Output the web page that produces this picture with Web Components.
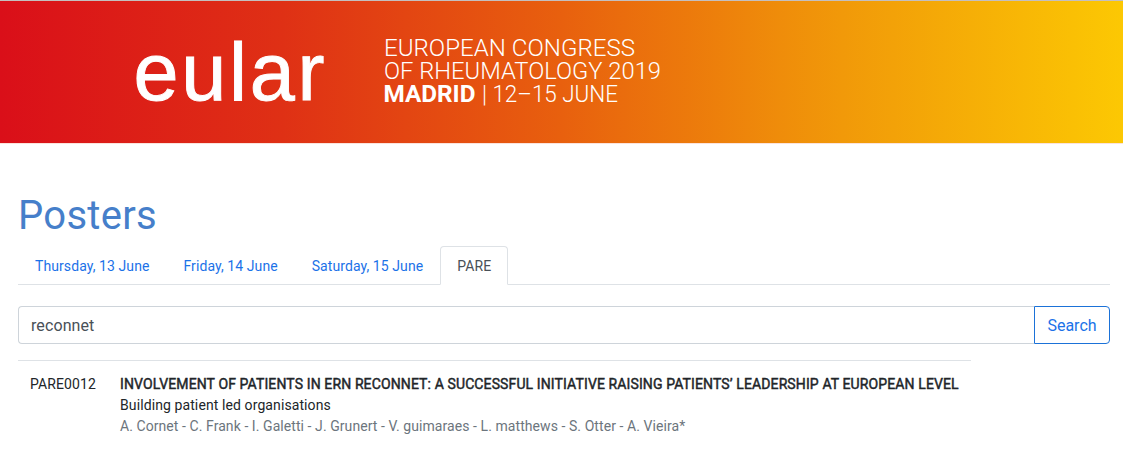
<!DOCTYPE html>
<html lang="en">
<head>
<meta charset="utf-8">
<title>Posters</title>
<style>
  body {
    margin: 0;
    background: #fff;
    color: #212529;
    font-family: Roboto, "Liberation Sans", sans-serif;
    font-size: 14px;
    line-height: 1.5;
  }
</style>
</head>
<body>
<poster-app></poster-app>

<script>
class CongressBanner extends HTMLElement {
  constructor() {
    super();
    this.attachShadow({ mode: 'open' });
  }

  connectedCallback() {
    this.shadowRoot.innerHTML = `
      <style>
        :host {
          display: block;
          height: 142px;
          border-top: 1px solid #c4bfbf;
          border-bottom: 1px solid #fbe3dc;
          background: linear-gradient(90deg, #da0f19 0%, #df3015 25%, #e8600e 50%, #f19909 75%, #fcc803 100%) padding-box;
        }
        svg { display: block; }
        .logo {
          font-family: "Liberation Sans", Arial, sans-serif;
          font-size: 81px;
          stroke: #fff;
          stroke-width: 0.9;
        }
        .line { font-size: 23.2px; font-weight: 300; }
        .city { font-weight: 700; }
      </style>
      <svg width="1123" height="142" viewBox="0 1 1123 142" fill="#fff">
        <text class="logo" x="133.5" y="100" textLength="191">eular</text>
        <text class="line">
          <tspan x="384" y="56" textLength="251" lengthAdjust="spacingAndGlyphs">EUROPEAN CONGRESS</tspan>
          <tspan x="384" y="79" textLength="277" lengthAdjust="spacingAndGlyphs">OF RHEUMATOLOGY 2019</tspan>
          <tspan class="city" x="383.5" y="102" textLength="92" lengthAdjust="spacingAndGlyphs">MADRID</tspan>
          <tspan x="482" y="102" textLength="136" lengthAdjust="spacingAndGlyphs">| 12–15 JUNE</tspan>
        </text>
      </svg>
    `;
  }
}

class DayTab extends HTMLElement {
  constructor() {
    super();
    this.attachShadow({ mode: 'open' });
    this.shadowRoot.innerHTML = `
      <style>
        :host {
          display: block;
          margin-bottom: -1px;
          padding: 9px 16px 7px;
          border: 1px solid transparent;
          border-radius: 4px 4px 0 0;
          color: #1b72e8;
          letter-spacing: 0.08px;
          cursor: pointer;
        }
        :host([active]) {
          color: #495057;
          background: #fff;
          border-color: #dee2e6 #dee2e6 #fff;
        }
      </style>
      <slot></slot>
    `;
  }
}

class DayTabs extends HTMLElement {
  constructor() {
    super();
    this.attachShadow({ mode: 'open' });
    this.shadowRoot.innerHTML = `
      <style>
        :host {
          display: flex;
          border-bottom: 1px solid #dee2e6;
        }
      </style>
      <slot></slot>
    `;

    this.addEventListener('click', (e) => {
      const tab = e.target.closest('day-tab');
      if (!tab) return;
      this.querySelectorAll('day-tab').forEach(t => t.removeAttribute('active'));
      tab.setAttribute('active', '');
    });
  }
}

class SearchBar extends HTMLElement {
  constructor() {
    super();
    this.attachShadow({ mode: 'open' });
  }

  connectedCallback() {
    const value = this.getAttribute('value') || '';

    this.shadowRoot.innerHTML = `
      <style>
        :host {
          display: flex;
          height: 38px;
        }
        input, button {
          box-sizing: border-box;
          margin: 0;
          padding: 7px 12px 5px;
          font: 16px/24px Roboto, "Liberation Sans", sans-serif;
          outline: none;
        }
        input {
          flex: 1;
          min-width: 0;
          color: #495057;
          background: #fff;
          border: 1px solid #ced4da;
          border-right: 0;
          border-radius: 4px 0 0 4px;
          letter-spacing: 0.1px;
        }
        button {
          width: 76px;
          color: #1b72e8;
          background: #fff;
          border: 1px solid #1b72d8;
          border-radius: 0 4px 4px 0;
          cursor: pointer;
        }
      </style>
      <input type="text" value="${value}">
      <button type="button">Search</button>
    `;
  }
}

class PosterRow extends HTMLElement {
  constructor() {
    super();
    this.attachShadow({ mode: 'open' });
  }

  connectedCallback() {
    const code = this.getAttribute('code') || '';

    this.shadowRoot.innerHTML = `
      <style>
        :host {
          display: grid;
          grid-template-columns: 66px 1fr;
          column-gap: 24px;
          box-sizing: border-box;
          width: 953px;
          padding: 13px 12px 12px;
          border-top: 1px solid #dee2e6;
          letter-spacing: 0.1px;
          white-space: nowrap;
        }
        .title {
          letter-spacing: 0.118px;
          -webkit-text-stroke: 0.45px currentColor;
        }
        .authors {
          color: #6c757d;
          letter-spacing: 0.07px;
        }
      </style>
      <div>${code}</div>
      <div>
        <div class="title"><slot name="title"></slot></div>
        <div><slot name="topic"></slot></div>
        <div class="authors"><slot name="authors"></slot></div>
      </div>
    `;
  }
}

class PosterApp extends HTMLElement {
  constructor() {
    super();
    this.attachShadow({ mode: 'open' });
  }

  connectedCallback() {
    this.shadowRoot.innerHTML = `
      <style>
        :host { display: block; }
        main { padding: 48px 13px 0 18px; }
        h1 {
          margin: 0 0 6px;
          font-size: 40px;
          font-weight: 400;
          line-height: 48px;
          letter-spacing: 0.3px;
          color: #467fca;
        }
        search-bar { margin: 21px 0 16px; }
      </style>
      <congress-banner></congress-banner>
      <main>
        <h1>Posters</h1>
        <day-tabs>
          <day-tab>Thursday, 13 June</day-tab>
          <day-tab>Friday, 14 June</day-tab>
          <day-tab>Saturday, 15 June</day-tab>
          <day-tab active>PARE</day-tab>
        </day-tabs>
        <search-bar value="reconnet"></search-bar>
        <poster-row code="PARE0012">
          <span slot="title">INVOLVEMENT OF PATIENTS IN ERN RECONNET: A SUCCESSFUL INITIATIVE RAISING PATIENTS’ LEADERSHIP AT EUROPEAN LEVEL</span>
          <span slot="topic">Building patient led organisations</span>
          <span slot="authors">A. Cornet - C. Frank - I. Galetti - J. Grunert - V. guimaraes - L. matthews - S. Otter - A. Vieira*</span>
        </poster-row>
      </main>
    `;
  }
}

customElements.define('congress-banner', CongressBanner);
customElements.define('day-tab', DayTab);
customElements.define('day-tabs', DayTabs);
customElements.define('search-bar', SearchBar);
customElements.define('poster-row', PosterRow);
customElements.define('poster-app', PosterApp);
</script>
</body>
</html>
